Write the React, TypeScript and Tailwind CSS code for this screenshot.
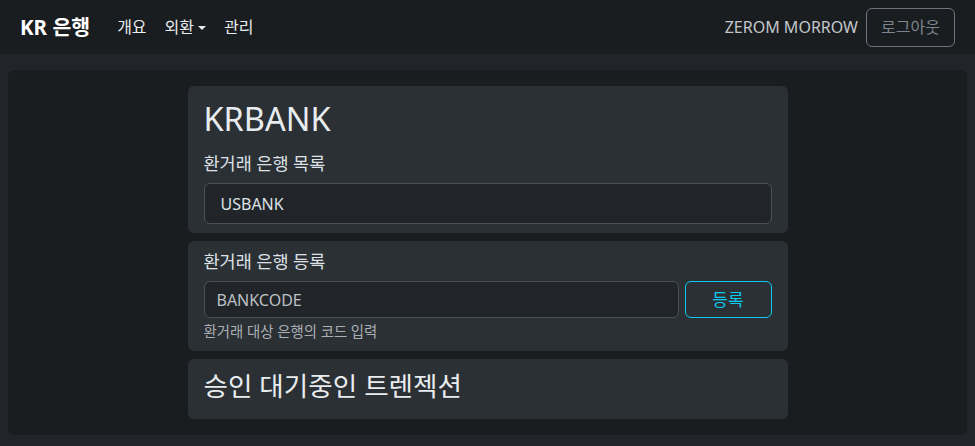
import { useState } from "react";

const font = "font-['Noto_Sans','Noto_Sans_CJK_KR',sans-serif]";

function NavBar() {
  return (
    <nav className="flex h-[54px] items-center justify-between bg-[#1a1d20] px-5">
      <div className="flex items-center">
        <a className="mr-[18px] text-[20.5px] font-bold text-white">KR 은행</a>
        <ul className="flex items-center text-[16px] text-[#e9ecef]">
          <li className="px-[9px]">개요</li>
          <li className="flex items-center px-[9px]">
            외환
            <span className="ml-[4px] mt-[1px] border-x-[4.8px] border-t-[4.8px] border-x-transparent border-t-[#e9ecef]" />
          </li>
          <li className="px-[9px]">관리</li>
        </ul>
      </div>
      <div className="flex items-center">
        <span className="mr-2 text-[16px] text-[#c3c7cb]">ZEROM MORROW</span>
        <button className="h-[39px] w-[89px] rounded-[6px] border border-[#6c757d] text-[16px] text-[#7d848b]">
          로그아웃
        </button>
      </div>
    </nav>
  );
}

export default function App() {
  const [code, setCode] = useState("");

  return (
    <div className={`min-h-[446px] bg-[#212529] text-[#dee2e6] ${font}`}>
      <NavBar />
      <div className="mx-2 mt-4 rounded-[6px] bg-[#1a1d20] py-4">
        <div className="mx-auto flex w-[600px] flex-col gap-[8px]">
          <div className="rounded-[6px] bg-[#2b3035] px-4 pt-2 pb-[9px]">
            <h1 className="mb-[7px] text-[32.5px] leading-[50px] text-[#e9ecef]">KRBANK</h1>
            <p className="mb-2 text-[17.5px] leading-6">환거래 은행 목록</p>
            <div className="flex h-[41px] items-center rounded-[6px] border border-[#495057] bg-[#212529] px-4 text-[16px]">
              USBANK
            </div>
          </div>

          <div className="rounded-[6px] bg-[#2b3035] px-4 pt-2 pb-[9px]">
            <p className="mb-2 text-[17.5px] leading-6">환거래 은행 등록</p>
            <div className="flex gap-[6px]">
              <input
                className="h-[37px] flex-1 rounded-[6px] border border-[#495057] bg-[#212529] px-3 text-[16px] text-[#dee2e6] outline-none placeholder:text-[#bcc0c4]"
                placeholder="BANKCODE"
                value={code}
                onChange={(e) => setCode(e.target.value)}
              />
              <button className="h-[37px] w-[87px] rounded-[6px] border border-[#0dcaf0] text-[17px] text-[#0dcaf0]">
                등록
              </button>
            </div>
            <p className="mt-[3px] text-[14.4px] leading-[21px] text-[#abafb3]">환거래 대상 은행의 코드 입력</p>
          </div>

          <div className="rounded-[6px] bg-[#2b3035] px-4 pt-[11px] pb-[17px]">
            <h3 className="text-[26.6px] leading-[32px] text-[#e9ecef]">승인 대기중인 트렌젝션</h3>
          </div>
        </div>
      </div>
    </div>
  );
}
